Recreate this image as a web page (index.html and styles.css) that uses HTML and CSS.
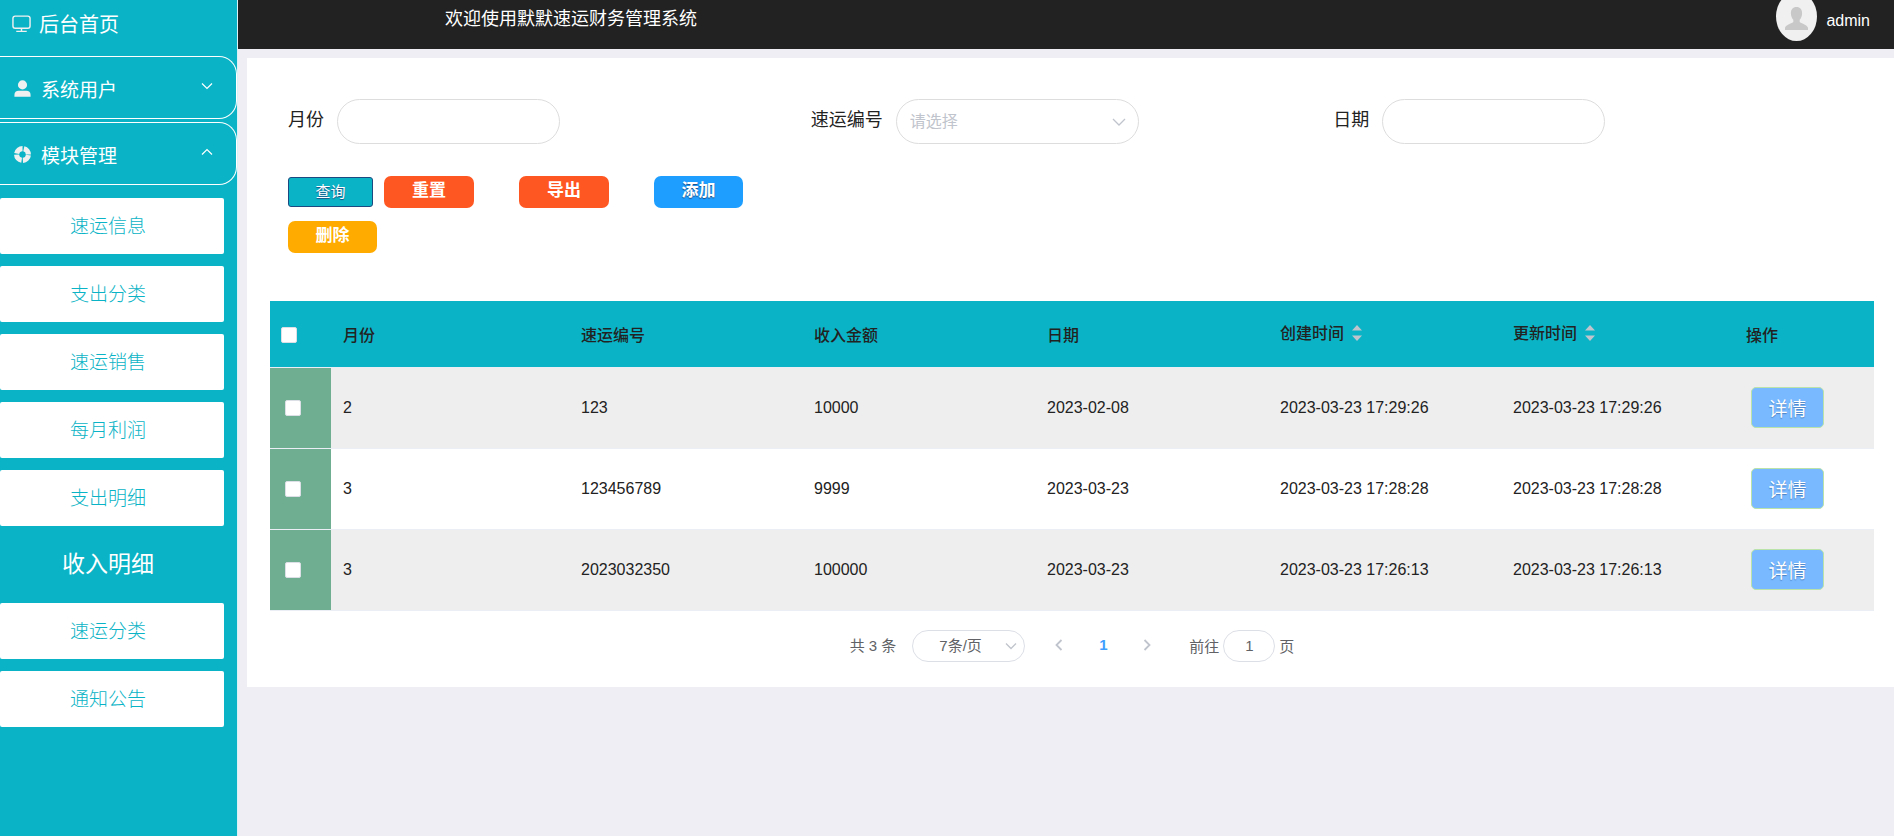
FILE: index.html
```html
<!DOCTYPE html>
<html lang="zh-CN">
<head>
<meta charset="utf-8">
<title>默默速运财务管理系统</title>
<link rel="stylesheet" href="styles.css">
</head>
<body>
<div class="app">
  <aside class="sidebar">
    <a class="home" href="#">
      <svg class="icon" viewBox="0 0 20 20" fill="none" stroke="currentColor" stroke-width="1.500"><rect x="1" y="2.200" width="18" height="12.800" rx="2.400"/><path d="M10 15v3M4.500 18.300h11"/></svg>
      后台首页
    </a>
    <nav class="menu">
      <button class="group" type="button">
        <svg class="icon" viewBox="0 0 20 20" fill="currentColor"><circle cx="10" cy="6.200" r="4.800"/><path d="M1.500 18.600v-1.800c0-3 1.800-4.400 4.400-4.400h8.200c2.600 0 4.400 1.400 4.400 4.400v1.800z"/></svg>
        <span class="group-name">系统用户</span>
        <svg class="arrow" viewBox="0 0 12 12" fill="none" stroke="currentColor" stroke-width="1.200"><path d="M1 3.500l5 5 5-5"/></svg>
      </button>
      <button class="group" type="button">
        <svg class="icon" viewBox="0 0 20 20" fill="none" stroke="currentColor"><circle cx="10" cy="10" r="6.200" stroke-width="5.400" stroke-dasharray="8.340 1.400" stroke-dashoffset="-.7"/></svg>
        <span class="group-name">模块管理</span>
        <svg class="arrow" viewBox="0 0 12 12" fill="none" stroke="currentColor" stroke-width="1.200"><path d="M1 8.500l5-5 5 5"/></svg>
      </button>
    </nav>
    <nav class="submenu">
      <a class="item" href="#">速运信息</a>
      <a class="item" href="#">支出分类</a>
      <a class="item" href="#">速运销售</a>
      <a class="item" href="#">每月利润</a>
      <a class="item" href="#">支出明细</a>
      <a class="item active" href="#">收入明细</a>
      <a class="item" href="#">速运分类</a>
      <a class="item" href="#">通知公告</a>
    </nav>
  </aside>
  <div class="main">
    <header class="topbar">
      <h1 class="title">欢迎使用默默速运财务管理系统</h1>
      <div class="user">
        <svg class="avatar" viewBox="0 0 41 49"><ellipse cx="20.500" cy="24.500" rx="20.500" ry="24.500" fill="#f0f0f0"/><path fill="#c8c8c8" d="M20.500 15c3.600 0 5.800 2.600 5.600 6.400-.1 2.600-1.200 5-2.400 6.400v2.200c1 1.400 7.600 2.600 8.300 5.800V38H9v-2.200c.7-3.200 7.300-4.400 8.300-5.800v-2.200c-1.200-1.400-2.300-3.800-2.400-6.400-.2-3.800 2-6.400 5.600-6.400z"/></svg>
        <span>admin</span>
      </div>
    </header>
    <main class="card">
      <form class="filters">
        <div class="field"><label for="month">月份</label><input class="box" id="month" type="text"></div>
        <div class="field"><label for="code">速运编号</label>
          <span class="picker"><select class="box" id="code"><option>请选择</option></select>
          <svg class="chev" viewBox="0 0 14 14" fill="none" stroke="currentColor" stroke-width="1.300"><path d="M1 4l6 6 6-6"/></svg></span>
        </div>
        <div class="field"><label for="date">日期</label><input class="box" id="date" type="text"></div>
      </form>
      <div class="actions">
        <button class="query" type="button">查询</button>
        <div class="tools">
          <button class="btn orange" type="button">重置</button>
          <button class="btn orange" type="button">导出</button>
          <button class="btn blue" type="button">添加</button>
        </div>
      </div>
      <div class="actions">
        <button class="btn yellow" type="button">删除</button>
      </div>
      <table class="grid">
        <colgroup><col class="c-check"><col class="c-month"><col class="c-data"><col class="c-data"><col class="c-data"><col class="c-data"><col class="c-data"><col class="c-op"></colgroup>
        <thead>
          <tr>
            <th class="pick"><input type="checkbox" aria-label="全选"></th>
            <th>月份</th><th>速运编号</th><th>收入金额</th><th>日期</th>
            <th><span class="sort">创建时间<svg viewBox="0 0 10 16" fill="currentColor"><path d="M5 0l5 5.500H0zM5 16l5-5.500H0z"/></svg></span></th>
            <th><span class="sort">更新时间<svg viewBox="0 0 10 16" fill="currentColor"><path d="M5 0l5 5.500H0zM5 16l5-5.500H0z"/></svg></span></th>
            <th>操作</th>
          </tr>
        </thead>
        <tbody>
          <tr><td class="pick"><input type="checkbox" aria-label="选择第1行"></td><td>2</td><td>123</td><td>10000</td><td>2023-02-08</td><td>2023-03-23 17:29:26</td><td>2023-03-23 17:29:26</td><td class="op"><button class="detail" type="button">详情</button></td></tr>
          <tr><td class="pick"><input type="checkbox" aria-label="选择第2行"></td><td>3</td><td>123456789</td><td>9999</td><td>2023-03-23</td><td>2023-03-23 17:28:28</td><td>2023-03-23 17:28:28</td><td class="op"><button class="detail" type="button">详情</button></td></tr>
          <tr><td class="pick"><input type="checkbox" aria-label="选择第3行"></td><td>3</td><td>2023032350</td><td>100000</td><td>2023-03-23</td><td>2023-03-23 17:26:13</td><td>2023-03-23 17:26:13</td><td class="op"><button class="detail" type="button">详情</button></td></tr>
        </tbody>
      </table>
      <div class="pager">
        <span class="total">共 3 条</span>
        <span class="picker sizes"><select aria-label="每页条数"><option>7条/页</option></select>
        <svg class="chev" viewBox="0 0 14 14" fill="none" stroke="currentColor" stroke-width="1.300"><path d="M2 4.500l5 5 5-5"/></svg></span>
        <div class="pages">
          <button type="button" aria-label="上一页"><svg viewBox="0 0 12 12" fill="none" stroke="currentColor" stroke-width="1.800"><path d="M8.500 1l-5 5 5 5"/></svg></button>
          <button class="current" type="button">1</button>
          <button type="button" aria-label="下一页"><svg viewBox="0 0 12 12" fill="none" stroke="currentColor" stroke-width="1.800"><path d="M3.500 1l5 5-5 5"/></svg></button>
        </div>
        <label class="jump">前往<input type="text" value="1">页</label>
      </div>
    </main>
  </div>
</div>
</body>
</html>
```
FILE: styles.css
```css
* { box-sizing: border-box; }
body {
  margin: 0;
  background: #efeef4;
  color: #222;
  font-family: "Liberation Sans", "Noto Sans CJK SC", sans-serif;
  font-size: 16px;
  font-weight: 400;
}
button, input, select { font: inherit; color: inherit; margin: 0; }
button { padding: 0; cursor: pointer; }
a { text-decoration: none; }
.app { display: flex; min-height: 100vh; }

/* Sidebar */
.sidebar {
  flex: none;
  width: 238px;
  background: #0ab4c6;
  border-right: 1px solid #d8f2f5;
  color: #fff;
}
.home {
  display: flex;
  align-items: center;
  gap: 8px;
  height: 56px;
  padding: 0 0 10px 12px;
  color: #fff;
  font-size: 20px;
}
.icon { flex: none; width: 19px; height: 19px; color: #f0f0f0; }
.menu { display: flex; flex-direction: column; gap: 3px; }
.group {
  display: flex;
  align-items: center;
  gap: 9px;
  height: 63px;
  padding: 1px 23px 0 13px;
  border: 1px solid #fff;
  border-left: 0;
  border-radius: 0 18px 18px 0;
  background: none;
  font-size: 19px;
  text-align: left;
}
.group-name { flex: 1; }
.arrow { width: 12px; height: 12px; margin-bottom: 4px; }
.submenu {
  display: flex;
  flex-direction: column;
  gap: 12px;
  padding: 13px 13px 13px 0;
}
.item {
  height: 56px;
  padding-right: 8px;
  border-radius: 2px;
  background: #fff;
  color: #0ab4c6;
  font-size: 19px;
  font-weight: 300;
  line-height: 57px;
  text-align: center;
}
.item.active {
  height: 53px;
  background: none;
  color: #fff;
  font-size: 23px;
  font-weight: 400;
  line-height: 53px;
}

/* Top bar */
.main { flex: 1; min-width: 0; }
.topbar {
  display: flex;
  justify-content: space-between;
  height: 49px;
  padding: 0 24px 0 207px;
  overflow: hidden;
  background: #222;
  color: #fff;
}
.title { margin: 0; font-size: 18px; font-weight: 400; line-height: 38px; }
.user { display: flex; align-items: center; gap: 9px; height: 42px; }
.avatar { width: 41px; height: 49px; margin-top: -10px; }

/* Content card */
.card {
  margin: 9px 0 0 9px;
  padding: 41px 20px 25px 23px;
  background: #fff;
}
.filters {
  display: grid;
  grid-template-columns: repeat(3, 1fr);
  margin: 0 18px 32px 18px;
}
.field { display: flex; align-items: center; gap: 13px; }
.field label { font-size: 18px; line-height: 40px; padding-bottom: 3px; }
.box {
  width: 223px;
  height: 45px;
  padding: 0 13px;
  border: 1px solid #ddd;
  border-radius: 23px;
  background: #fff;
}
.picker { position: relative; display: inline-block; }
.picker select { appearance: none; display: block; }
.picker .box { width: 243px; color: #c0c4cc; }
.chev {
  position: absolute;
  top: 50%;
  right: 13px;
  width: 14px;
  height: 14px;
  margin-top: -7px;
  color: #c0c4cc;
  pointer-events: none;
}
.actions {
  display: flex;
  align-items: center;
  gap: 11px;
  margin: 0 0 13px 18px;
}
.tools { display: flex; gap: 45px; }
.query {
  width: 85px;
  height: 30px;
  border: 1px solid #1c4a80;
  border-radius: 3px;
  background: #0ab4c6;
  color: #fff;
  font-size: 15px;
  line-height: 26px;
  text-shadow: 0 1px 1px #1c4a80;
}
.btn {
  width: 90px;
  height: 32px;
  padding-bottom: 3px;
  border: 0;
  border-radius: 7px;
  color: #fff;
  font-size: 17px;
  font-weight: 700;
  line-height: 28px;
}
.orange { background: #ff5722; }
.blue { width: 89px; background: #1e9fff; text-shadow: 0 1px 1px #1c4a80; }
.yellow { width: 89px; background: #ffab00; }

/* Table */
.grid {
  width: 100%;
  margin-top: 48px;
  border-collapse: collapse;
  table-layout: fixed;
}
.c-check { width: 61px; }
.c-month { width: 238px; }
.c-data { width: 233px; }
.grid th, .grid td { padding: 0 12px; text-align: left; border-bottom: 1px solid #ebeef5; }
.grid th {
  height: 66px;
  background: #0ab4c6;
  font-weight: 500;
}
.grid td { height: 81px; font-weight: 400; }
.grid tbody tr:nth-child(odd) { background: #eee; }
.grid td.pick { background: #6fae90; padding-left: 15px; }
.grid th.pick { padding: 3px 0 0 11px; }
.grid td.op { padding-left: 17px; }
.pick input {
  appearance: none;
  display: block;
  width: 16px;
  height: 16px;
  border: 1px solid #dcdfe6;
  border-radius: 2px;
  background: #fff;
}
.sort { display: flex; align-items: center; gap: 8px; padding-bottom: 4px; }
.sort svg { width: 10px; height: 16px; margin-top: 2px; color: #c0c4cc; }
.detail {
  display: block;
  width: 73px;
  height: 41px;
  border: 1px solid #b9e3a8;
  border-radius: 5px;
  background: #78b9ff;
  color: #fff;
  font-size: 19px;
  text-shadow: 0 1px 1px #4a7fc0;
}

/* Pagination */
.pager {
  display: flex;
  align-items: center;
  justify-content: center;
  margin-top: 19px;
  color: #606266;
  font-size: 15px;
}
.total { padding-bottom: 3px; }
.sizes { margin: 0 16px; }
.sizes select {
  width: 113px;
  height: 32px;
  padding: 0 26px;
  border: 1px solid #dcdfe6;
  border-radius: 16px;
  background: #fff;
}
.sizes .chev { right: 7px; }
.pages { display: flex; gap: 8px; margin-right: 24px; }
.pages button {
  display: flex;
  align-items: center;
  justify-content: center;
  width: 36px;
  height: 32px;
  padding-bottom: 2px;
  border: 0;
  background: none;
  color: #c0c4cc;
}
.pages svg { width: 12px; height: 12px; }
.pages .current { color: #409eff; font-weight: 700; }
.jump { display: flex; align-items: center; gap: 4px; }
.jump input {
  width: 52px;
  height: 32px;
  border: 1px solid #dcdfe6;
  border-radius: 16px;
  background: #fff;
  text-align: center;
}
```
